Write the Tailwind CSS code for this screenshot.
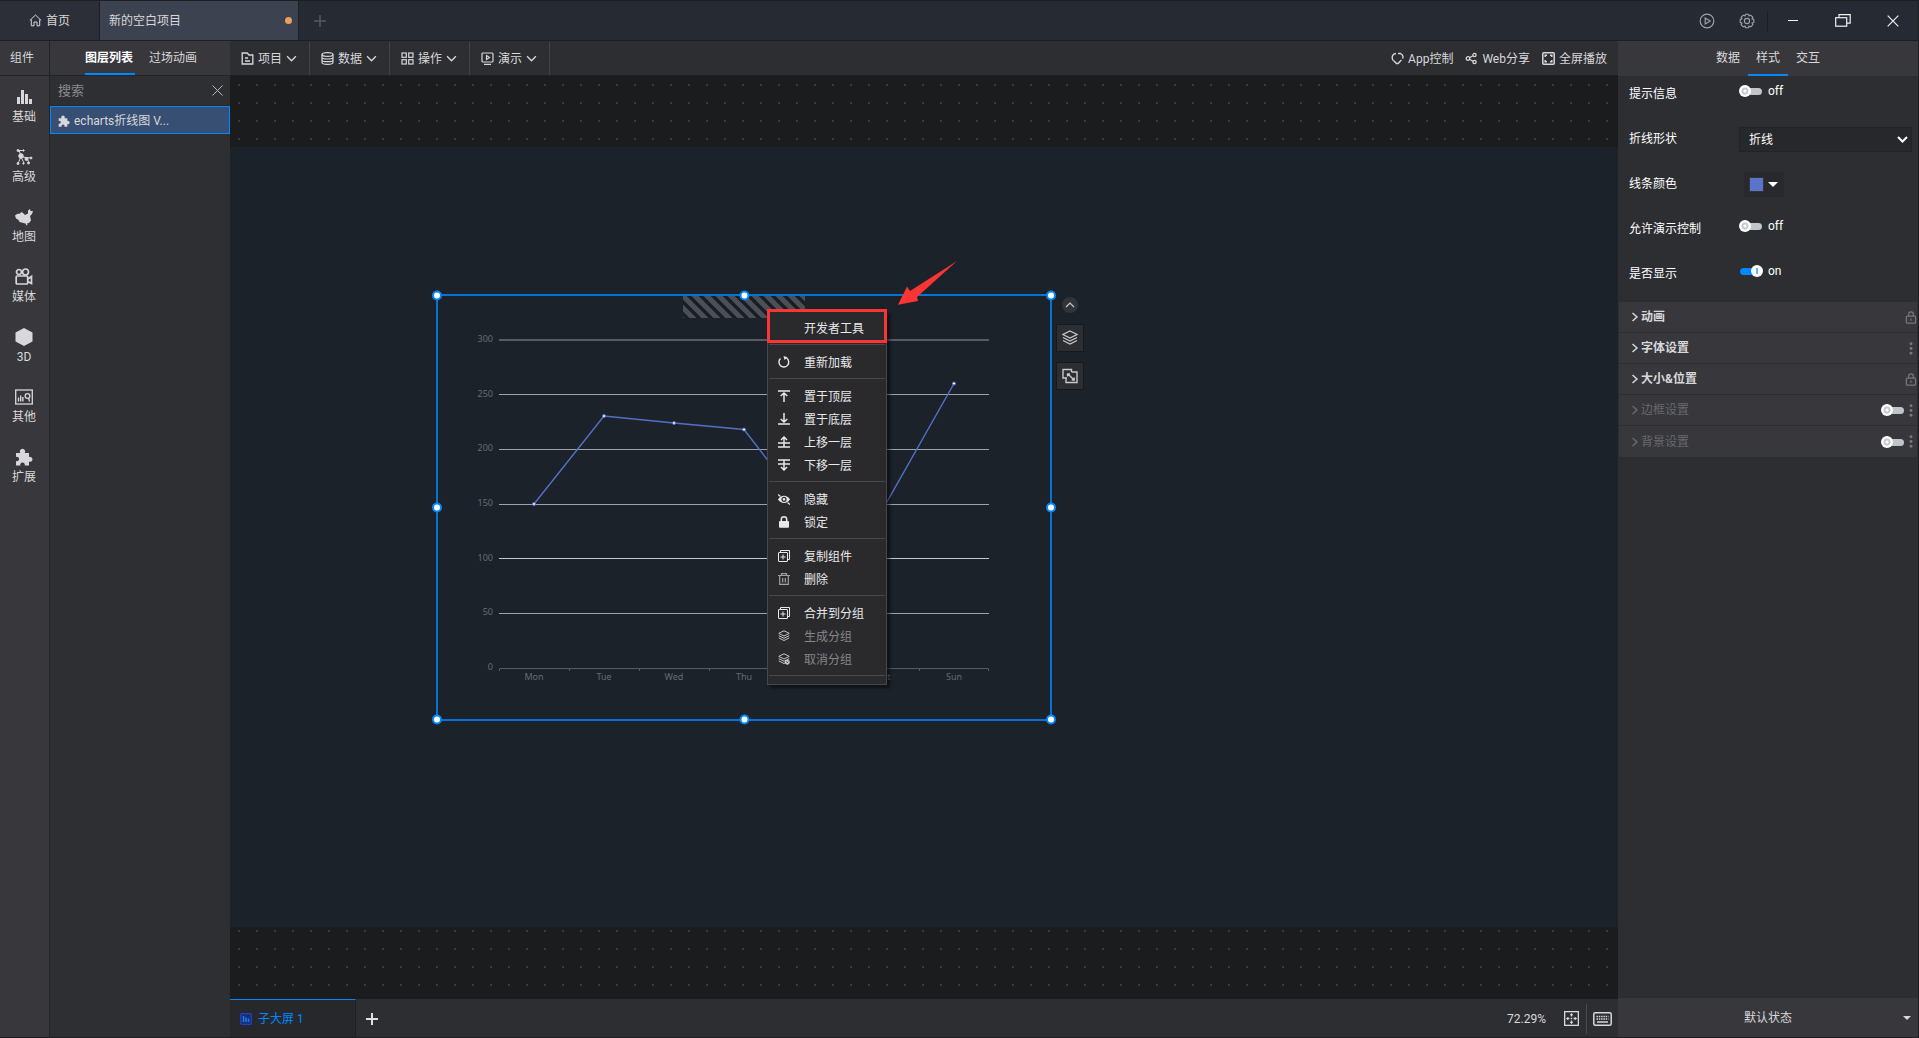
<!DOCTYPE html>
<html lang="zh-CN">
<head>
<meta charset="utf-8">
<title>新的空白项目</title>
<script src="https://cdn.jsdelivr.net/npm/@tailwindcss/browser@4"></script>
</head>
<body class="h-screen overflow-hidden bg-[#2d2e32] font-['Roboto','Noto_Sans_CJK_SC',sans-serif] text-xs text-[#d8d8da]">
<svg class="hidden" aria-hidden="true">
  <symbol id="down" viewBox="0 0 10 10"><path d="M1 3l4 4 4-4" fill="none" stroke="currentColor" stroke-width="1.2"/></symbol>
  <symbol id="right" viewBox="0 0 8 10"><path d="M1.500 1L6 5 1.500 9" fill="none" stroke="currentColor" stroke-width="1.500"/></symbol>
  <symbol id="puzzle" viewBox="0 0 18 18"><path fill="currentColor" d="M1 5h4.200a2.700 2.700 0 1 1 4.600 0H14v4a2.500 2.500 0 1 1 0 4.600V17.500H9.700a2.300 2.300 0 1 0-4.300 0H1v-4.500a2.200 2.200 0 1 0 0-4z"/></symbol>
  <symbol id="layers" viewBox="0 0 16 16"><g fill="none" stroke="currentColor" stroke-width="1.200"><path d="M8 1l7 3.500-7 3.500-7-3.500z"/><path d="M1 7.500L8 11l7-3.500M1 10.500L8 14l7-3.500"/></g></symbol>
  <symbol id="copy" viewBox="0 0 12 12"><g fill="none" stroke="currentColor"><rect x=".5" y="2.500" width="9" height="9" rx=".5"/><path d="M2.500 2.500v-2h9v9h-2M5 4.500v5M2.500 7h5"/></g></symbol>
  <symbol id="lock" viewBox="0 0 12 14"><g fill="none" stroke="currentColor" stroke-width="1.300"><rect x="1" y="5.500" width="10" height="7.500" rx="1"/><path d="M3.500 5.500V3.500a2.500 2.500 0 0 1 5 0v2M6 8v2.500"/></g></symbol>
  <symbol id="more" viewBox="0 0 4 14"><g fill="currentColor"><circle cx="2" cy="2" r="1.600"/><circle cx="2" cy="7" r="1.600"/><circle cx="2" cy="12" r="1.600"/></g></symbol>
</svg>

<div class="flex h-full flex-col border-t border-r border-b border-[#1e1f22]">
  <!-- Title bar -->
  <header class="flex h-10 shrink-0 items-stretch border-b border-[#1d1e21] bg-[#262a32]">
    <button class="flex w-[100px] items-center justify-center gap-1 border-r border-[#1d1e21] bg-[#2c2f37]">
      <svg class="size-[13px]" viewBox="0 0 13 13"><path d="M.8 6.500L6.500 1l5.700 5.500M2.300 5.500v6.300h2.700V8h3v3.800h2.700V5.500" fill="none" stroke="currentColor"/></svg>首页
    </button>
    <button class="flex w-[199px] items-center justify-between border-r border-[#1d1e21] bg-[#3d4250] pr-1.5 pl-[9px]">新的空白项目<span class="size-[7px] rounded-full bg-[#e6a15c]"></span></button>
    <button class="w-10 pl-0.5 text-[#55585e]" aria-label="新建"><svg class="mx-auto size-3" viewBox="0 0 12 12"><path d="M6 0v12M0 6h12" stroke="currentColor" stroke-width="1.500"/></svg></button>
    <div class="ml-auto flex items-center text-[#f0f0f0]">
      <button class="flex w-10 justify-center text-[#a0a2a6]" aria-label="播放"><svg class="size-4" viewBox="0 0 16 16"><g fill="none" stroke="currentColor" stroke-width="1.200"><circle cx="8" cy="8" r="6.800"/><path d="M6.200 5v6l5-3z"/></g></svg></button>
      <button class="flex w-10 justify-center text-[#a0a2a6]" aria-label="设置"><svg class="size-4" viewBox="0 0 16 16"><g fill="none" stroke="currentColor" stroke-width="1.100"><path d="M6.500 1.200h3l.5 1.800 1.700-.900 2.200 2.200-.900 1.700 1.800.500v3l-1.800.500.900 1.700-2.200 2.200-1.700-.900-.500 1.800h-3L6 13l-1.700.900-2.200-2.200.900-1.700-1.800-.500v-3L3 6l-.900-1.700 2.200-2.200L6 3z"/><circle cx="8" cy="8" r="2.600"/></g></svg></button>
      <span class="h-5 w-px bg-[#1d1e21]"></span>
      <button class="flex w-[50px] justify-center" aria-label="最小化"><svg class="h-3 w-[10px]" viewBox="0 0 10 12"><path d="M0 5.500h10" stroke="currentColor"/></svg></button>
      <button class="flex w-[33px] justify-end" aria-label="还原"><svg class="h-[13px] w-4" viewBox="0 0 16 13"><g fill="none" stroke="currentColor" stroke-width="1.200"><rect x=".7" y="3.700" width="11" height="8.500"/><path d="M4 3.500V.7h11.200v8.500h-3.500"/></g></svg></button>
      <button class="flex w-[67px] justify-end pr-[19px]" aria-label="关闭"><svg class="size-3" viewBox="0 0 12 12"><path d="M.7.7l10.600 10.600M11.300.7L.7 11.300" stroke="currentColor" stroke-width="1.200"/></svg></button>
    </div>
  </header>

  <div class="flex min-h-0 flex-1">
    <!-- Component rail -->
    <nav class="flex w-[50px] shrink-0 flex-col border-r border-[#222326] bg-[#37373c]">
      <h2 class="flex h-[35px] items-center border-b border-[#222326] pl-2.5">组件</h2>
      <div class="flex flex-col pt-3 pr-px">
        <button class="flex h-[60px] flex-col items-center gap-[3px]"><svg class="size-[18px]" viewBox="0 0 18 18"><path fill="currentColor" d="M2 9h3v7H2zM6 2h3v14H6zM10 6h3v10h-3zM14 11h3v5h-3z"/></svg>基础</button>
        <button class="flex h-[60px] flex-col items-center gap-[3px]"><svg class="size-[18px]" viewBox="0 0 18 18"><g fill="currentColor" stroke="currentColor"><path fill="none" d="M3 2.500h5M4 2l2 6-3 8M6 9l3 6M7 9l9 1M12 10l2 5"/><circle cx="6" cy="8" r="2.300"/><circle cx="3" cy="2.500" r="1"/><circle cx="8.500" cy="2.500" r=".7"/><circle cx="16" cy="10" r="1"/><circle cx="13.500" cy="15" r="1"/><circle cx="3" cy="15.500" r="1"/><circle cx="8.500" cy="15.500" r=".7"/><circle cx="11.500" cy="11" r="1.500"/></g></svg>高级</button>
        <button class="flex h-[60px] flex-col items-center gap-[3px]"><svg class="size-[18px]" viewBox="0 0 18 18"><path fill="currentColor" d="M0 7.500l2-1.500 3-.500L6.500 4l1.500 1 2 2 3-1.500V2.500L15 1l.5 2H18l-1 3-2 2 .5 2 .5 2.500-2 2.500-2 .500.500 1.500-1 .500-1-2-2-.500-4-1L3.500 12 1 10.500z"/></svg>地图</button>
        <button class="flex h-[60px] flex-col items-center gap-[3px]"><svg class="size-[18px]" viewBox="0 0 18 18"><g fill="none" stroke="currentColor" stroke-width="1.700"><circle cx="4" cy="4" r="2.500"/><circle cx="10.500" cy="4" r="3"/><rect x="1.200" y="8" width="11.500" height="8" rx="1"/><path d="M13 11l3.500-2.500v7L13 13.500"/></g></svg>媒体</button>
        <button class="flex h-[60px] flex-col items-center gap-[3px]"><svg class="size-[18px]" viewBox="0 0 18 18"><path fill="currentColor" d="M9 0l8.500 4.500v9L9 18 .5 13.500v-9z"/></svg>3D</button>
        <button class="flex h-[60px] flex-col items-center gap-[3px]"><svg class="size-[18px]" viewBox="0 0 18 18"><g fill="none" stroke="currentColor" stroke-width="1.300"><rect x=".7" y="2" width="16.600" height="14"/><path d="M3.500 9.500v4M5.700 7.500v6M7.900 9v4.500" stroke-width="1.400"/><circle cx="12.500" cy="8" r="2.400"/><path d="M13.500 10l1 3.500"/></g></svg>其他</button>
        <button class="flex h-[60px] flex-col items-center gap-[3px]"><svg class="size-[18px]"><use href="#puzzle"/></svg>扩展</button>
      </div>
    </nav>

    <!-- Layer list -->
    <aside class="flex w-[180px] shrink-0 flex-col bg-[#2e2f33]">
      <div class="flex h-[35px] items-stretch gap-3.5 border-b border-[#222326] bg-[#37373c] pl-[35px]">
        <button class="w-[50px] border-b-2 border-[#0088ff] pt-0.5 text-left font-bold text-white">图层列表</button>
        <button class="border-b-2 border-transparent pt-0.5">过场动画</button>
      </div>
      <div class="flex h-[30px] items-center justify-between border-b border-[#27282b] pr-[7px] pl-2">
        <input aria-label="搜索" placeholder="搜索" class="w-32 bg-transparent text-[13px] outline-none placeholder:text-[#8a8a8c]">
        <button aria-label="清除"><svg class="size-[11px]" viewBox="0 0 11 11"><path d="M.5.5l10 10M10.500.5l-10 10" stroke="#b8b8ba"/></svg></button>
      </div>
      <button class="flex h-7 items-center gap-1 border border-[#0088ff] bg-[#374f73] pt-px pl-[7px]"><svg class="size-3"><use href="#puzzle"/></svg>echarts折线图 V...</button>
    </aside>

    <!-- Workspace -->
    <main class="flex min-w-0 flex-1 flex-col">
      <div class="flex h-[35px] shrink-0 items-stretch border-b border-[#1d1e20] bg-[#2d2e32] pt-px">
        <button class="flex w-20 items-center gap-1 border-r border-[#434448] pl-[11px]"><svg class="size-[13px]" viewBox="0 0 13 13"><path d="M1.200 1h5L8 3h3.800v9H1.200zM4 6h3M4 9h5" fill="none" stroke="currentColor" stroke-width="1.300"/></svg>项目<svg class="size-[11px]"><use href="#down"/></svg></button>
        <button class="flex w-20 items-center gap-1 border-r border-[#434448] pl-[11px]"><svg class="size-[13px]" viewBox="0 0 13 13"><g fill="none" stroke="currentColor" stroke-width="1.200"><ellipse cx="6.500" cy="2.500" rx="5.500" ry="1.900"/><path d="M1 2.500v8c0 2.500 11 2.500 11 0v-8M1 5.200c0 2.400 11 2.400 11 0M1 7.900c0 2.400 11 2.400 11 0"/></g></svg>数据<svg class="size-[11px]"><use href="#down"/></svg></button>
        <button class="flex w-20 items-center gap-1 border-r border-[#434448] pl-[11px]"><svg class="size-[13px]" viewBox="0 0 13 13"><g fill="none" stroke="currentColor" stroke-width="1.200"><rect x="1" y="1" width="4.300" height="4.300"/><rect x="7.700" y="1" width="4.300" height="4.300"/><rect x="1" y="7.700" width="4.300" height="4.300"/><rect x="7.700" y="7.700" width="4.300" height="4.300"/></g></svg>操作<svg class="size-[11px]"><use href="#down"/></svg></button>
        <button class="flex w-20 items-center gap-1 border-r border-[#434448] pl-[11px]"><svg class="size-[13px]" viewBox="0 0 13 13"><g fill="none" stroke="currentColor" stroke-width="1.200"><rect x="1" y="1" width="11" height="9" rx="1"/><path d="M3 12.300h7M5.500 3.500v4l3-2z"/></g></svg>演示<svg class="size-[11px]"><use href="#down"/></svg></button>
        <div class="ml-auto flex items-center gap-3 pr-[11px]">
          <button class="flex items-center gap-1"><svg class="size-[13px]" viewBox="0 0 13 13"><path d="M2 8.500C.3 5 1.500 1.800 5 1.500M7 1.500h2.500C12 3 12.500 5 11.500 6.500M2.500 8.500L5.500 11.500H7C8 11 9 9 10.500 8" fill="none" stroke="currentColor" stroke-width="1.400"/></svg>App控制</button>
          <button class="flex items-center gap-1"><svg class="size-[13px]" viewBox="0 0 13 13"><g fill="none" stroke="currentColor" stroke-width="1.300"><circle cx="3" cy="6.500" r="1.800"/><circle cx="9.500" cy="3" r="1.600"/><circle cx="9.500" cy="10" r="1.600"/><path d="M4.500 5.700L8 3.800M4.500 7.300L8 9.200"/></g></svg>Web分享</button>
          <button class="flex items-center gap-1"><svg class="size-[13px]" viewBox="0 0 13 13"><g fill="none" stroke="currentColor" stroke-width="1.500"><rect x=".8" y=".8" width="11.400" height="11.400" rx="1"/><path d="M3.200 5V3.200H5M8 3.200h1.800V5M9.800 8v1.800H8M5 9.800H3.200V8"/></g></svg>全屏播放</button>
        </div>
      </div>

      <div class="flex min-h-0 flex-1 flex-col bg-[#1b1c1e] bg-[radial-gradient(circle,#38393b_1px,transparent_1px)] bg-size-[18px_18px] pt-[71px] pb-[72px]">
        <div class="relative flex-1 bg-[#1c222a]">
          <!-- Selected chart component -->
          <svg class="absolute top-[140px] left-[200px] h-[440px] w-[628px]" viewBox="430 287 628 440" role="img" aria-label="echarts折线图">
            <defs>
              <pattern id="stripes" width="12" height="12" patternUnits="userSpaceOnUse" patternTransform="translate(683 296)"><rect width="12" height="12" fill="#1a1d23"/><path d="M-6 -6L18 18M-6 6L6 18M6 -6L18 6" stroke="#4b4f57" stroke-width="5"/></pattern>
              <g id="handle"><circle r="4" fill="#fff" stroke="#0088ff" stroke-width="2"/></g>
            </defs>
            <rect x="683" y="296" width="122" height="22" fill="url(#stripes)"/>
            <g stroke="#9da1ab" fill="none">
              <path d="M499 340h490" stroke="#555a65" stroke-width="2"/>
              <path d="M499 394.500h490M499 449.500h490M499 504.500h490M499 613.500h490" />
              <path d="M499 558.500h490" stroke="#c5c8d0"/>
              <path d="M499.500 671v-2.500h489v2.500M569.500 668v3M639.500 668v3M709.500 668v3M779.500 668v3M849.500 668v3M919.500 668v3" stroke="#585b63"/>
            </g>
            <path d="M534 504L604 416 674 423 744 429.500 814 520 884 507 954 383.500" fill="none" stroke="#5470c6" stroke-width="1.400"/>
            <g fill="#fff" stroke="#5470c6"><circle cx="534" cy="504" r="1.500"/><circle cx="604" cy="416" r="1.500"/><circle cx="674" cy="423" r="1.500"/><circle cx="744" cy="429.500" r="1.500"/><circle cx="954" cy="383.500" r="1.500"/></g>
            <g class="font-['Noto_Sans'] text-[9px]" fill="#686b74">
              <g text-anchor="end"><text x="493" y="342">300</text><text x="493" y="397">250</text><text x="493" y="451">200</text><text x="493" y="506">150</text><text x="493" y="561">100</text><text x="493" y="615">50</text><text x="493" y="670">0</text></g>
              <g text-anchor="middle"><text x="534" y="680">Mon</text><text x="604" y="680">Tue</text><text x="674" y="680">Wed</text><text x="744" y="680">Thu</text><text x="814" y="680">Fri</text><text x="884" y="680">Sat</text><text x="954" y="680">Sun</text></g>
            </g>
            <rect x="437" y="295" width="614" height="425" fill="none" stroke="#0088ff" stroke-width="1.600"/>
            <use href="#handle" x="437" y="295.500"/><use href="#handle" x="744.500" y="295.500"/><use href="#handle" x="1051" y="295.500"/><use href="#handle" x="437" y="507.500"/><use href="#handle" x="1051" y="507.500"/><use href="#handle" x="437" y="719.500"/><use href="#handle" x="744.500" y="719.500"/><use href="#handle" x="1051" y="719.500"/>
          </svg>

          <div class="absolute top-[150px] left-[826px] flex w-7 flex-col items-center text-[#c8c8ca]">
            <button class="mb-[11px] grid size-4 place-items-center rounded-full bg-[#333438]" aria-label="收起"><svg class="size-[10px] rotate-180"><use href="#down"/></svg></button>
            <button class="mb-[10px] grid size-7 place-items-center border border-[#18191c] bg-[#2d2e32]" aria-label="图层"><svg class="size-4"><use href="#layers"/></svg></button>
            <button class="grid size-7 place-items-center border border-[#18191c] bg-[#2d2e32]" aria-label="缩放"><svg class="size-4" viewBox="0 0 16 16"><g fill="none" stroke="currentColor" stroke-width="1.400"><path d="M5 10H1V1.500h8.500V4"/><path d="M9.500 4H15v10.500H4V10M6 6l6 6M5.500 8.500V6H8M12.200 9.500V12H9.700"/></g></svg></button>
          </div>

          <!-- Context menu -->
          <div class="absolute top-[163px] left-[537px] w-[120px] border border-[#47484b] bg-[#2a2a2d] px-px pt-1.5 pb-0.5 text-[#e8e8ea] shadow-[3px_3px_3px_rgba(0,0,0,0.5)]">
            <button class="flex h-[23px] w-full items-center pl-[35px]">开发者工具</button>
            <hr class="mt-1 mb-1.5 border-[#47484b]">
            <button class="flex h-[23px] w-full items-center gap-[14px] pl-[9px]"><svg class="mb-0.5 size-3" viewBox="0 0 12 12"><path d="M2.500 2.500A4.900 4.900 0 1 0 8.500 2" fill="none" stroke="currentColor" stroke-width="1.400"/><path d="M5.500 0L9.500 1.300 6.500 4z" fill="currentColor"/></svg>重新加载</button>
            <hr class="mt-1 mb-1.5 border-[#47484b]">
            <button class="flex h-[23px] w-full items-center gap-[14px] pl-[9px]"><svg class="mb-0.5 size-3" viewBox="0 0 12 12"><path d="M0 1h12M6 12V3M2.700 6L6 3l3.300 3" fill="none" stroke="currentColor" stroke-width="1.500"/></svg>置于顶层</button>
            <button class="flex h-[23px] w-full items-center gap-[14px] pl-[9px]"><svg class="mb-0.5 size-3" viewBox="0 0 12 12"><path d="M0 11h12M6 0v9M2.700 6L6 9l3.300-3" fill="none" stroke="currentColor" stroke-width="1.500"/></svg>置于底层</button>
            <button class="flex h-[23px] w-full items-center gap-[14px] pl-[9px]"><svg class="mb-0.5 size-3" viewBox="0 0 12 12"><path d="M0 11h12M0 7h12M6 11V1M3 4l3-3 3 3" fill="none" stroke="currentColor" stroke-width="1.500"/></svg>上移一层</button>
            <button class="flex h-[23px] w-full items-center gap-[14px] pl-[9px]"><svg class="mb-0.5 size-3" viewBox="0 0 12 12"><path d="M0 1h12M0 5h12M6 1v10M3 8l3 3 3-3" fill="none" stroke="currentColor" stroke-width="1.500"/></svg>下移一层</button>
            <hr class="mt-1 mb-1.5 border-[#47484b]">
            <button class="flex h-[23px] w-full items-center gap-[14px] pl-[9px]"><svg class="mb-0.5 size-3" viewBox="0 0 12 12"><path d="M0 6.500C3 1.500 9 1.500 12 6.500 9 11 3 11 0 6.500z" fill="currentColor"/><circle cx="6" cy="6.300" r="2" fill="none" stroke="#2a2a2d" stroke-width="1.200"/><path d="M0 1.500l2.500 2M9.500 9.500l2.500 2" stroke="currentColor" stroke-width="1.300"/></svg>隐藏</button>
            <button class="flex h-[23px] w-full items-center gap-[14px] pl-[9px]"><svg class="mb-0.5 size-3" viewBox="0 0 12 12"><rect x="1" y="5" width="10" height="6.700" rx="1" fill="currentColor"/><path d="M3.300 5.500V3.500a2.700 2.700 0 0 1 5.400 0v2" fill="none" stroke="currentColor" stroke-width="1.500"/></svg>锁定</button>
            <hr class="mt-1 mb-1.5 border-[#47484b]">
            <button class="flex h-[23px] w-full items-center gap-[14px] pl-[9px]"><svg class="mb-0.5 size-3"><use href="#copy"/></svg>复制组件</button>
            <button class="flex h-[23px] w-full items-center gap-[14px] pl-[9px]"><svg class="mb-0.5 size-3 text-[#a0a0a2]" viewBox="0 0 12 12"><path d="M0 2.500h12M3.500 2.500V.7h5v1.800M1.700 2.500v8.800h8.600V2.500M4.700 5v4.500M7.300 5v4.500" fill="none" stroke="currentColor" stroke-width="1.200"/></svg>删除</button>
            <hr class="mt-1 mb-1.5 border-[#47484b]">
            <button class="flex h-[23px] w-full items-center gap-[14px] pl-[9px]"><svg class="mb-0.5 size-3"><use href="#copy"/></svg>合并到分组</button>
            <button class="flex h-[23px] w-full items-center gap-[14px] pl-[9px] text-[#85868a]"><svg class="mb-0.5 size-3 text-[#d8d8da]"><use href="#layers"/></svg>生成分组</button>
            <button class="flex h-[23px] w-full items-center gap-[14px] pl-[9px] text-[#85868a]"><svg class="mb-0.5 size-3 text-[#d8d8da]" viewBox="0 0 12 12"><use href="#layers" width="12" height="12"/><circle cx="9.300" cy="9.300" r="2.400" fill="currentColor"/><path d="M8.300 8.300l2 2M10.300 8.300l-2 2" stroke="#2a2a2d" stroke-width=".7"/></svg>取消分组</button>
            <hr class="mt-1 mb-1.5 border-[#47484b]">
          </div>

          <!-- Callout: frame and arrow -->
          <div class="pointer-events-none absolute top-[162px] left-[537px] h-[34px] w-[120px] border-3 border-[#fb3434]"></div>
          <svg class="pointer-events-none absolute top-[114px] left-[668px] h-11 w-[60px]" viewBox="898 261 60 44"><path d="M898 304.700L907 286.500 910 291 957 261 917 297 918 301z" fill="#fb3434"/></svg>
        </div>
      </div>

      <footer class="flex h-[38px] shrink-0 items-stretch bg-[#2d2e32]">
        <button class="flex w-[126px] items-center gap-1.5 border-t border-r border-t-[#0088ff] border-r-[#1e1f22] bg-[#27282c] pt-px pl-2.5 text-[#0088ff]"><svg class="size-3" viewBox="0 0 12 12"><rect x=".7" y=".7" width="10.600" height="10.600" rx="1" fill="#1b2c6b" stroke="#2340c0" stroke-width="1.300"/><path d="M3.500 3v6M6 4.500V9M8.500 5.500V9" stroke="currentColor" stroke-width="1.500"/></svg>子大屏 1</button>
        <button class="w-8 pr-px pt-px text-[#e0e0e0]" aria-label="新增子大屏"><svg class="mx-auto size-3" viewBox="0 0 12 12"><path d="M6 0v12M0 6h12" stroke="currentColor" stroke-width="2"/></svg></button>
        <div class="ml-auto flex items-center pt-px pr-1.5">
          <span class="mr-[18px]">72.29%</span>
          <button class="mr-[7px]" aria-label="适应画布"><svg class="size-[15px]" viewBox="0 0 16 16"><rect x=".7" y=".7" width="14.600" height="14.600" fill="none" stroke="currentColor" stroke-width="1.400"/><path d="M8 2l2 2.500H6zM8 14l2-2.500H6zM2 8l2.500-2v4zM14 8l-2.500-2v4zM7.200 7.200h1.600v1.600H7.200zM7.300 4.500h1.400v1.300H7.300zM7.300 10.200h1.400v1.300H7.300zM4.500 7.300h1.300v1.400H4.500zM10.200 7.300h1.300v1.400h-1.300z" fill="currentColor"/></svg></button>
          <span class="mr-1.5 h-[30px] w-px bg-[#4a4b4f]"></span>
          <button aria-label="快捷键"><svg class="h-[14px] w-[19px]" viewBox="0 0 19 14"><rect x=".8" y=".8" width="17.400" height="12.400" rx="1.500" fill="none" stroke="currentColor" stroke-width="1.500"/><path d="M3.500 4.500h12M3.500 7h12" stroke="currentColor" stroke-width="1.500" stroke-dasharray="1.500 .8"/><path d="M4 10h11" stroke="currentColor" stroke-width="1.500"/></svg></button>
        </div>
      </footer>
    </main>

    <!-- Property panel -->
    <aside class="flex w-[300px] shrink-0 flex-col bg-[#2d2e32] text-white">
      <div class="flex h-[35px] shrink-0 items-stretch justify-center bg-[#37373c] text-[#d8d8da]">
        <button class="w-10 border-b-2 border-transparent">数据</button>
        <button class="w-10 border-b-2 border-[#0088ff]">样式</button>
        <button class="w-10 border-b-2 border-transparent">交互</button>
      </div>
      <div class="mb-px pr-1.5 pl-[11px]">
        <div class="flex h-[45px] items-start"><label for="tip" class="w-[110px] leading-9">提示信息</label>
          <div class="flex h-[30px] items-center gap-[5px]"><input id="tip" type="checkbox" class="relative h-3 w-6 appearance-none before:absolute before:inset-x-px before:top-[3px] before:h-[7px] before:rounded-full before:bg-[#c0c4cc] after:absolute after:top-0 after:left-0 after:size-3 after:rounded-full after:bg-[radial-gradient(circle,#fff_1px,#c8c8d0_2px,#c8c8d0_3px,#fff_4px)]">off</div></div>
        <div class="flex h-[45px] items-start"><label for="shape" class="w-[110px] leading-9">折线形状</label>
          <div class="relative mt-1.5 flex-1"><select id="shape" class="h-[25px] w-full appearance-none border border-[#222326] bg-[#27282c] pl-[9px]"><option>折线</option></select><svg class="pointer-events-none absolute top-[7px] right-1 size-[11px]" viewBox="0 0 11 11"><path d="M1 3l4.500 4.500L10 3" fill="none" stroke="#fff" stroke-width="2"/></svg></div></div>
        <div class="flex h-[45px] items-start"><span class="w-[110px] leading-9">线条颜色</span>
          <button class="mt-1.5 ml-[5px] flex h-[25px] w-10 items-center gap-1 bg-[#29292d] pl-[5px]" aria-label="线条颜色"><span class="size-[15px] border border-[#34353b] bg-[#5b74c8]"></span><svg class="h-[5px] w-[10px]" viewBox="0 0 10 5"><path d="M0 0h10L5 5z" fill="#fff"/></svg></button></div>
        <div class="flex h-[45px] items-start"><label for="allow" class="w-[110px] leading-9">允许演示控制</label>
          <div class="flex h-[30px] items-center gap-[5px]"><input id="allow" type="checkbox" class="relative h-3 w-6 appearance-none before:absolute before:inset-x-px before:top-[3px] before:h-[7px] before:rounded-full before:bg-[#c0c4cc] after:absolute after:top-0 after:left-0 after:size-3 after:rounded-full after:bg-[radial-gradient(circle,#fff_1px,#c8c8d0_2px,#c8c8d0_3px,#fff_4px)]">off</div></div>
        <div class="flex h-[45px] items-start"><label for="show" class="w-[110px] leading-9">是否显示</label>
          <div class="flex h-[30px] items-center gap-[5px]"><input id="show" type="checkbox" checked class="relative h-3 w-6 appearance-none before:absolute before:inset-x-px before:top-[3px] before:h-[7px] before:rounded-full before:bg-[#0088ff] after:absolute after:top-0 after:right-0 after:size-3 after:rounded-full after:bg-white after:bg-[linear-gradient(#6cb4f8,#6cb4f8)] after:bg-size-[2px_6px] after:bg-center after:bg-no-repeat">on</div></div>
      </div>
      <div class="mx-px flex flex-col font-bold text-[#d8d8da]">
        <div class="flex h-[31px] items-center border-b border-[#2d2e32] bg-[#37373c] pl-3"><svg class="mr-0.5 h-[10px] w-2"><use href="#right"/></svg>动画<svg class="ml-auto h-[13px] w-3 text-[#77787c]"><use href="#lock"/></svg></div>
        <div class="flex h-[31px] items-center border-b border-[#2d2e32] bg-[#37373c] pl-3"><svg class="mr-0.5 h-[10px] w-2"><use href="#right"/></svg>字体设置<svg class="mr-1 ml-auto h-[13px] w-1 text-[#77787c]"><use href="#more"/></svg></div>
        <div class="flex h-[31px] items-center border-b border-[#2d2e32] bg-[#37373c] pl-3"><svg class="mr-0.5 h-[10px] w-2"><use href="#right"/></svg>大小&amp;位置<svg class="ml-auto h-[13px] w-3 text-[#77787c]"><use href="#lock"/></svg></div>
        <div class="flex h-[31px] items-center border-b border-[#2d2e32] bg-[#37373c] pl-3 font-normal text-[#68696d]"><svg class="mr-0.5 h-[10px] w-2"><use href="#right"/></svg><label for="frame">边框设置</label>
          <input id="frame" type="checkbox" class="relative ml-auto h-3 w-6 appearance-none before:absolute before:inset-x-px before:top-[3px] before:h-[7px] before:rounded-full before:bg-[#c0c4cc] after:absolute after:top-0 after:left-0 after:size-3 after:rounded-full after:bg-[radial-gradient(circle,#fff_1px,#c8c8d0_2px,#c8c8d0_3px,#fff_4px)]"><svg class="mr-1 ml-1 h-[13px] w-1 text-[#77787c]"><use href="#more"/></svg></div>
        <div class="flex h-[31px] items-center bg-[#37373c] pl-3 font-normal text-[#68696d]"><svg class="mr-0.5 h-[10px] w-2"><use href="#right"/></svg><label for="backdrop">背景设置</label>
          <input id="backdrop" type="checkbox" class="relative ml-auto h-3 w-6 appearance-none before:absolute before:inset-x-px before:top-[3px] before:h-[7px] before:rounded-full before:bg-[#c0c4cc] after:absolute after:top-0 after:left-0 after:size-3 after:rounded-full after:bg-[radial-gradient(circle,#fff_1px,#c8c8d0_2px,#c8c8d0_3px,#fff_4px)]"><svg class="mr-1 ml-1 h-[13px] w-1 text-[#77787c]"><use href="#more"/></svg></div>
      </div>
      <button class="mt-auto flex h-[39px] items-center justify-center bg-[#37373c] text-[#d8d8da]"><span class="flex-1 pl-[15px]">默认状态</span><svg class="mr-[7px] h-1 w-2" viewBox="0 0 8 4"><path d="M0 0h8L4 4z" fill="currentColor"/></svg></button>
    </aside>
  </div>
</div>
</body>
</html>
